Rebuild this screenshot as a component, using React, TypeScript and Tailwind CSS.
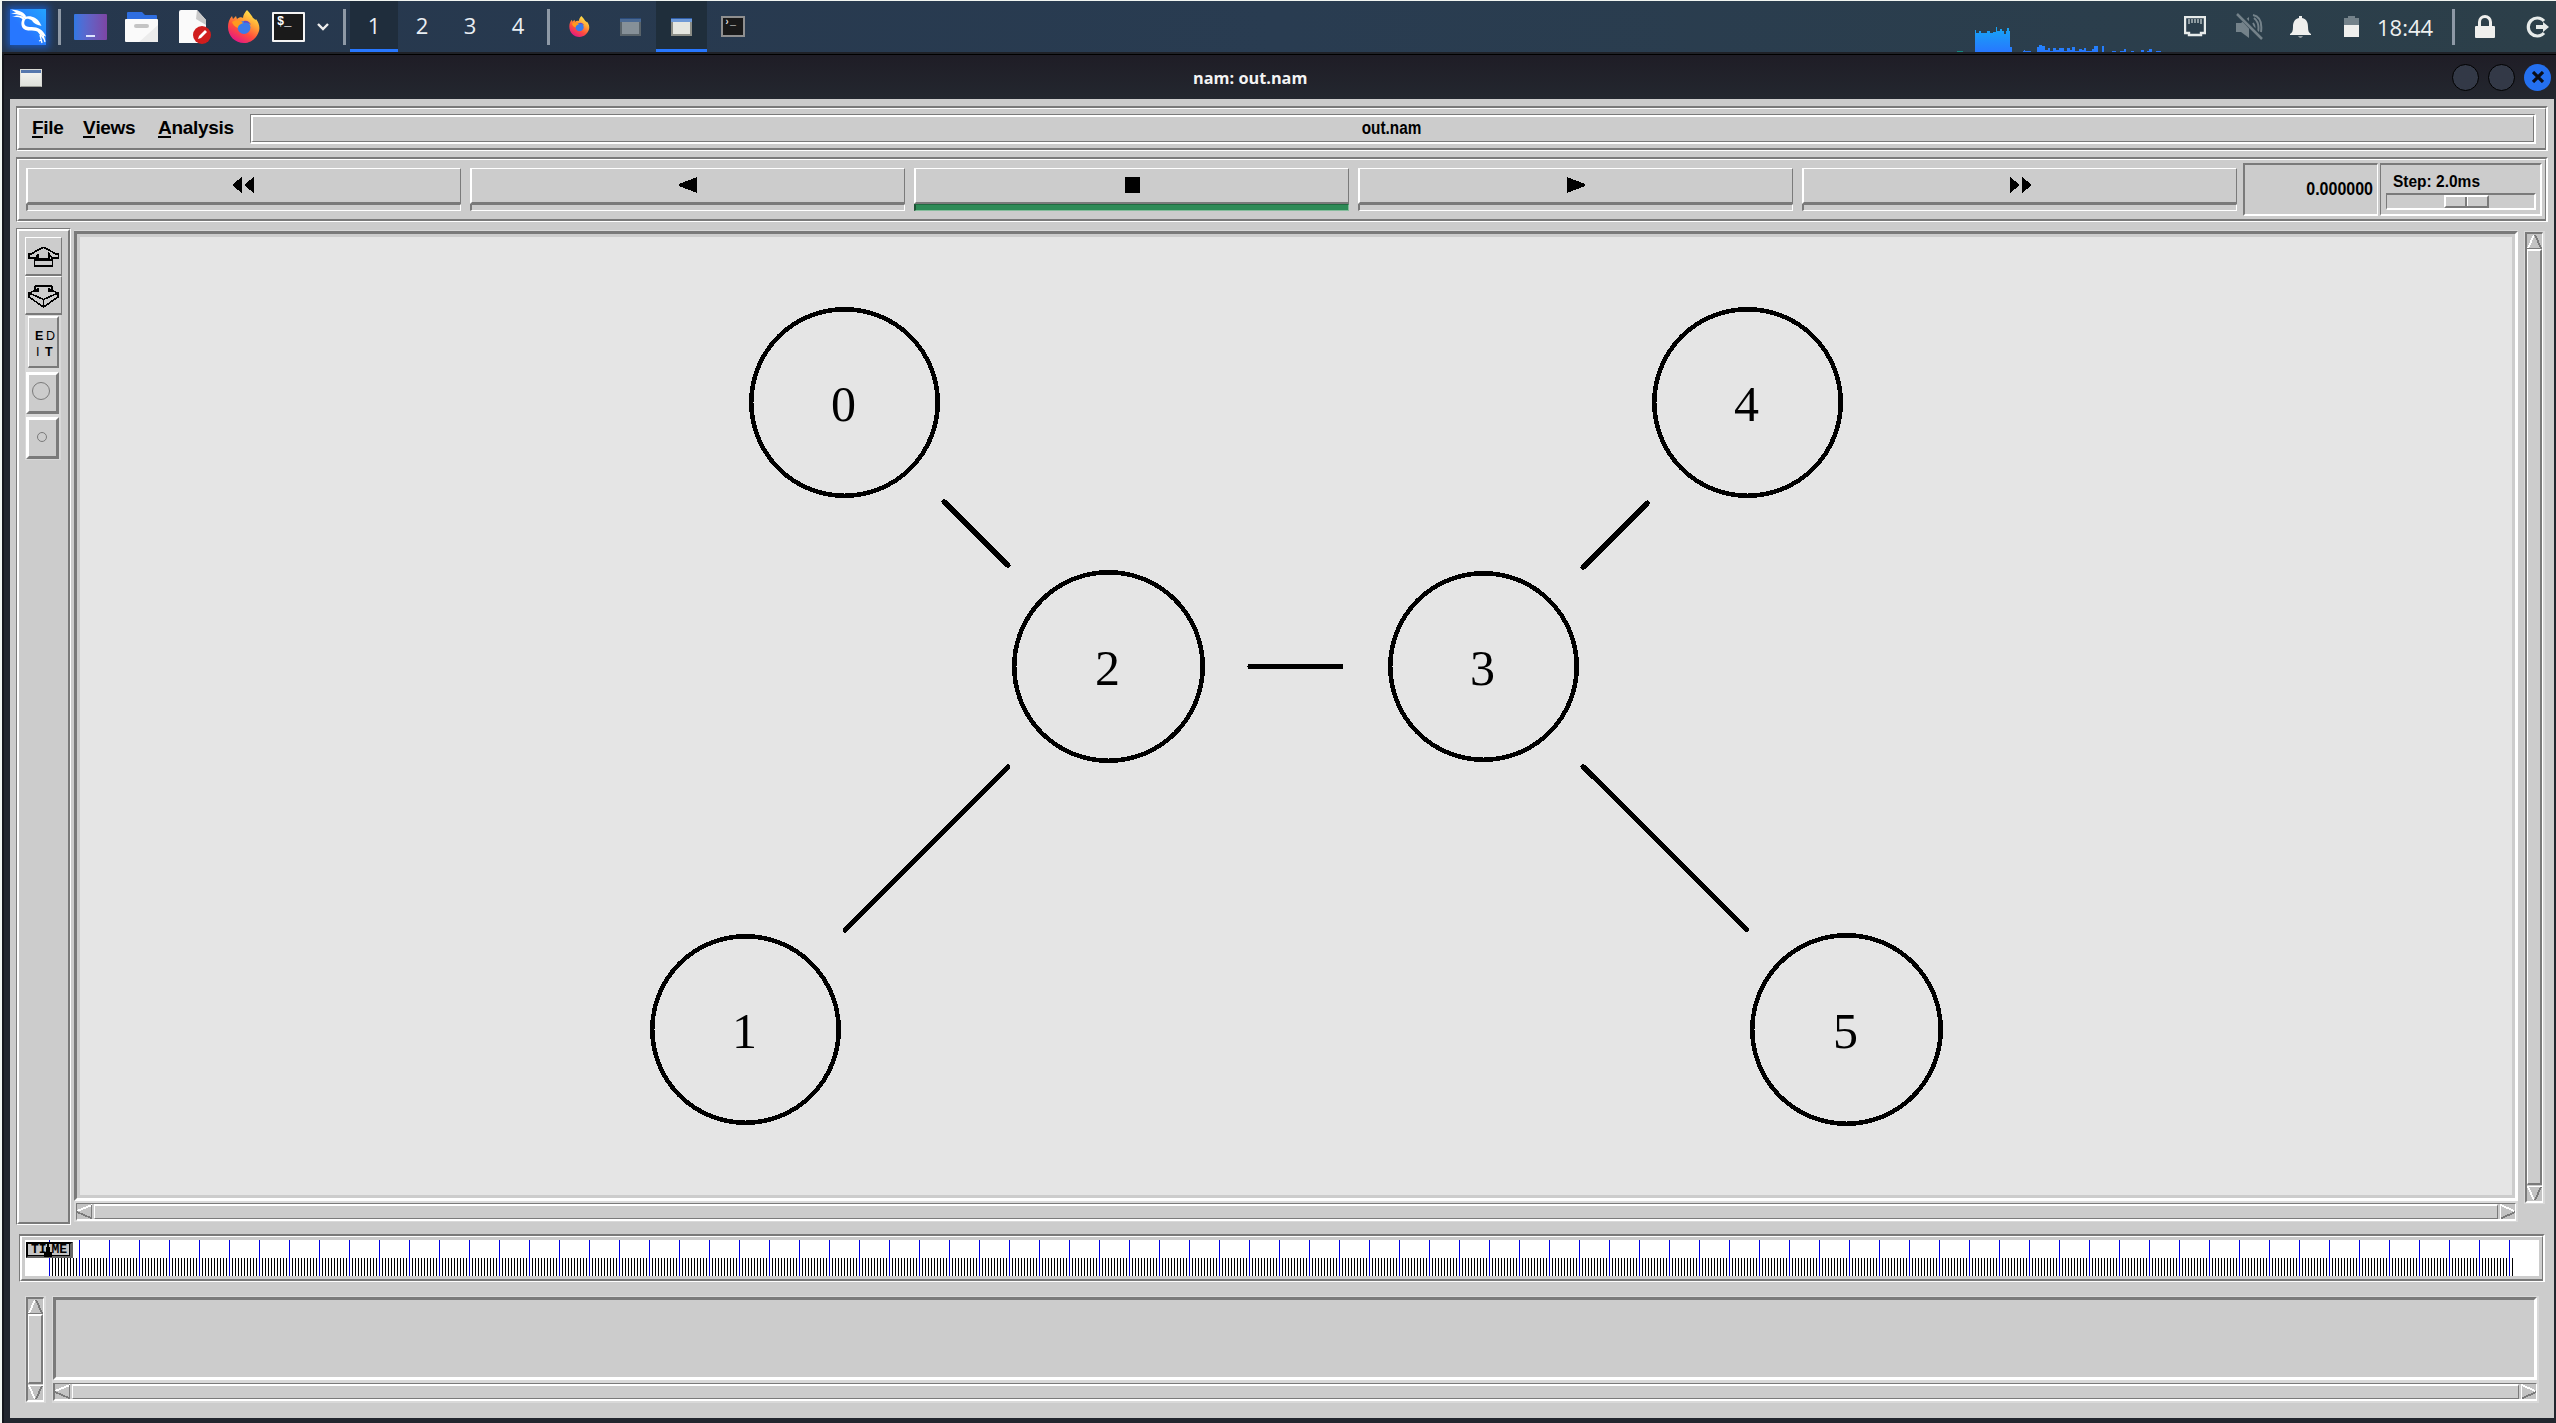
import type { ReactNode } from "react";

function Divider({ className }: { className: string }) {
  return <div className={`h-9 w-[3px] shrink-0 bg-[#8e99a6] ${className}`} />;
}

function KaliLogo() {
  return (
    <svg className="ml-2 h-9 w-9 shrink-0 shadow-[0_0_7px_3px_#1b55b5]" viewBox="0 0 36 36">
      <defs>
        <linearGradient id="kali" x1="1" y1="0" x2="0" y2="1">
          <stop offset="0" stopColor="#23a4ff" />
          <stop offset="0.6" stopColor="#2777ff" />
        </linearGradient>
      </defs>
      <rect width="36" height="36" fill="url(#kali)" />
      <g fill="#fff">
        <path d="M1 0.500C6 1 13 1.500 16 7L15 9.500C11 5.500 6 5 1 4.500L6 3.500Z" />
        <path d="M2 8C6 5.500 12 6 15 9L13 10.500C10 8 6 7.500 2 8Z" />
        <path d="M14 8C20 6 27 8 30 14L31.500 17C28 16 24 15 22 11.500C19 9.500 16 9.500 15 10.500Z" />
        <path d="M13 9C10 14 11 21 18 21.500C24 22 28 21 31.500 26L36 27.500C33 20 27 17.500 20 18C14 18 13 14 15.500 10Z" />
      </g>
      <path d="M28 22L34 30M30 26L32 34M33 26L35 33M29 32L32 31" fill="none" stroke="#fff" strokeWidth="1.300" />
    </svg>
  );
}

function Firefox({ className }: { className: string }) {
  return (
    <svg className={`shrink-0 ${className}`} viewBox="0 0 32 33">
      <defs>
        <linearGradient id="fox" x1="0.85" y1="0.05" x2="0.3" y2="1">
          <stop offset="0" stopColor="#fff04e" />
          <stop offset="0.35" stopColor="#ffa436" />
          <stop offset="0.65" stopColor="#ff4f3c" />
          <stop offset="1" stopColor="#e31587" />
        </linearGradient>
      </defs>
      <path
        d="M19 0C22 3 24 6 25 8C27 9 28 11 28 9C31 13 32 17 31 21C29 28 23 33 16 33C7 33 0 26 0 17C0 13 1 9 4 6L5 9L8 6L9 9C11 7 14 7 15 8C15 5 17 2 19 0Z"
        fill="url(#fox)"
      />
      <circle cx="16" cy="17.5" r="6.5" fill="#3a7bea" />
      <path d="M16 11C19 10 22 12 23 15C21 13 19 12 16 13Z" fill="#6a48c4" />
      <path d="M4 12C8 9 13 10 15 13C13 14 10 15 10 18C7 17 5 15 4 12Z" fill="#ff9a1f" />
    </svg>
  );
}

function WindowIcon({ className }: { className: string }) {
  return (
    <div className={`h-[18px] w-[21px] shrink-0 border-2 border-t-0 border-[#8b8d86] bg-[#e4e6e0] ${className}`}>
      <div className="-mx-0.5 h-1 border-t border-[#2f5ea8] bg-[#6f9ad6]" />
    </div>
  );
}

function Panel() {
  return (
    <div className="flex h-[52px] shrink-0 items-center overflow-hidden border-t border-[#f1f5f1] bg-linear-to-r from-[#26374d] via-[#293c51] to-[#2c3f49] font-normal">
      <KaliLogo />
      <Divider className="ml-3" />
      <div className="ml-[13px] flex h-[26px] w-[33px] shrink-0 items-end justify-center rounded-[1px] bg-linear-to-r from-[#2f78e4] to-[#7c45a4] pb-[3px]">
        <div className="h-0.5 w-[9px] bg-[#dde4ff]" />
      </div>
      <svg className="ml-[18px] h-[30px] w-[33px] shrink-0" viewBox="0 0 33 30">
        <path d="M2 1q0-1 1-1h14l3 3h11q1 0 1 1v4H2z" fill="#2f6ee0" />
        <rect y="7" width="33" height="23" rx="1" fill="#fafafa" />
        <path d="M33 13V30H14z" fill="#ececec" />
        <rect x="9" y="12" width="15" height="4" rx="2" fill="#c4c4c4" />
      </svg>
      <svg className="ml-[21px] h-[34px] w-8 shrink-0" viewBox="0 0 32 34">
        <path d="M2 0H18L27 10V33H0V2Q0 0 2 0Z" fill="#fafafa" />
        <path d="M18 0L27 10V15L17 9z" fill="#c9c9c9" />
        <circle cx="23" cy="25" r="9" fill="#d01d1d" />
        <path d="M19 29L20 26L26 20L28 22L22 28Z" fill="#fff" />
      </svg>
      <Firefox className="ml-[17px] h-[33px] w-8" />
      <div className="ml-3 h-[30px] w-[33px] shrink-0 rounded-[1px] border-2 border-[#f4f4f4] bg-[#1a1a1a] pl-[3px] font-['Liberation_Mono'] text-[12px] leading-[16px] font-bold text-white">
        $_
      </div>
      <svg className="ml-3 h-2 w-3 shrink-0" viewBox="0 0 12 8">
        <path d="M1 1L6 6L11 1" fill="none" stroke="#eee" strokeWidth="2.4" />
      </svg>
      <Divider className="ml-3.5" />
      <div className="ml-1 flex self-stretch font-['Open_Sans'] text-[22px] leading-[49px] text-[#e9eef3]">
        <div className="w-12 border-b-[3px] border-[#2777ff] bg-[#1f2d3c] text-center">1</div>
        <div className="w-12 text-center">2</div>
        <div className="w-12 text-center">3</div>
        <div className="w-12 text-center">4</div>
      </div>
      <Divider className="ml-[5px]" />
      <Firefox className="ml-[19px] h-[21px] w-[21px]" />
      <WindowIcon className="ml-[30px] opacity-50" />
      <div className="ml-[15px] flex w-[51px] items-center justify-center self-stretch border-b-[3px] border-[#2777ff] bg-[#1f2e3b]">
        <WindowIcon className="mt-[3px]" />
      </div>
      <div className="ml-3.5 h-[21px] w-6 shrink-0 border-2 border-[#8f8f8f] bg-[#191919] pl-px font-['Liberation_Mono'] text-[10px] leading-[10px] font-bold text-[#ddd]">
        ›_
      </div>
      <svg className="ml-[1212px] h-[25px] w-[205px] shrink-0 self-end" viewBox="0 0 205 25" shapeRendering="crispEdges">
        <defs>
          <linearGradient id="load" gradientUnits="userSpaceOnUse" x1="0" y1="0" x2="0" y2="25">
            <stop offset="0" stopColor="#17a6f5" />
            <stop offset="1" stopColor="#2777ff" />
          </linearGradient>
        </defs>
        <path d="M0 24h6v1h-6z" fill="#138a80" />
        <path
          d="M18 3h1v3h3v-2h2v2h6v-2h3v2h3v-1h3v-5h1v4h3v-2h2v2h2v3h2v-3h1v-3h2v3h1v16h2v5h7v1H18zM66 25v-1h1v-1h1v1h6v1zM80 25v-5h2v-2h3v1h3v4h3v-2h2v3h3v-3h3v2h3v-2h5v3h3v-3h3v2h2v-3h3v4h4v-2h3v1h2v-2h2v3h6v-2h2v-3h4v6h4v-6h2v6zM155 25v-1h4v1zM163 25v-1h4v-2h2v3zM174 25v-1h3v1zM184 25v-2h3v2zM190 25v-1h2v-2h3v3zM199 25v-1h5v1z"
          fill="url(#load)"
        />
      </svg>
      <svg className="ml-[22px] h-[21px] w-[22px] shrink-0" viewBox="0 0 22 21">
        <path d="M1 1H21V17H17V19H5V17H1Z" fill="none" stroke="#e7ebea" strokeWidth="2.4" />
        <path d="M5 3v5M8 3v4M11 3v4M14 3v4M17 3v5" stroke="#c3cccd" strokeWidth="1.3" />
      </svg>
      <svg className="ml-[30px] h-7 w-7 shrink-0" viewBox="0 0 28 28" fill="none" stroke="#74828a" strokeWidth="2">
        <path d="M0 10H5L13 4V25L5 19H0Z" fill="#74828a" stroke="none" />
        <path d="M17 10Q20 14 17 19M18 5Q24 10 22 19M17 2Q27 4 25 19" />
        <path d="M2 0L27 27" stroke="#2b3e4a" strokeWidth="5" />
        <path d="M1 1L26 26" strokeWidth="2.5" />
      </svg>
      <svg className="ml-[26px] h-[22px] w-[21px] shrink-0" viewBox="0 0 21 22" fill="#efefed">
        <path d="M9 0h3v2c5 1 6 5 6 9 0 4 1 6 3 7v1H0v-1c2-1 3-3 3-7 0-4 1-8 6-9zM8 20.500h5q-2.500 2-5 0z" />
      </svg>
      <svg className="ml-[33px] h-[22px] w-[15px] shrink-0" viewBox="0 0 15 22" shapeRendering="crispEdges">
        <path d="M4 0h7v2h4v8H0V2h4z" fill="#74828a" />
        <path d="M0 9h15v12H0z" fill="#efefed" />
      </svg>
      <div className="ml-[18px] w-[58px] shrink-0 font-['Open_Sans'] text-[22px] leading-[50px] text-[#eef0f0]">18:44</div>
      <Divider className="ml-[17px]" />
      <svg className="ml-5 h-6 w-5 shrink-0" viewBox="0 0 20 24">
        <path d="M4.500 12V7a5.500 5.500 0 0 1 11 0v5" fill="none" stroke="#efefed" strokeWidth="3" />
        <rect y="11" width="20" height="12" rx="1" fill="#efefed" />
      </svg>
      <svg className="ml-[31px] h-[22px] w-[23px] shrink-0" viewBox="0 0 23 22">
        <path d="M18 5A9 9 0 1 0 18 17" fill="none" stroke="#e7ebea" strokeWidth="3.2" />
        <path d="M10 9h7V6l6 5-6 5v-3h-7z" fill="#e7ebea" />
      </svg>
    </div>
  );
}

function TitleBar() {
  return (
    <div className="flex h-[45px] items-center border-t border-black bg-linear-to-b from-[#1f1d26] to-[#23272f] pl-4">
      <div className="mt-px h-[18px] w-[22px] border border-[#d9dad5] border-b-[#9a9c96] bg-linear-to-b from-[#f5f5f3] to-[#dde0da]">
        <div className="h-[3px] bg-[#5577ad]" />
      </div>
      <div className="ml-[1151px] w-[1259px] pt-0.5 font-['Open_Sans'] text-[16.300px] leading-5 font-bold whitespace-nowrap text-[#f3f3f3]">
        nam: out.nam
      </div>
      <div className="h-[27px] w-[27px] rounded-full border-[1.500px] border-black bg-[#333947]" />
      <div className="ml-[9px] h-[27px] w-[27px] rounded-full border-[1.500px] border-black bg-[#333947]" />
      <div className="ml-[9px] flex h-[27px] w-[27px] items-center justify-center rounded-full bg-[#2470f0]">
        <svg className="h-3 w-3" viewBox="0 0 12 12">
          <path d="M1 1L11 11M11 1L1 11" stroke="#0b0e18" strokeWidth="3.200" />
        </svg>
      </div>
    </div>
  );
}

/* Ridge frame of the two top bars: sunken edge outside, raised edge inside. */
function BarFrame({ className, children }: { className: string; children: ReactNode }) {
  return (
    <div className={`w-[2532px] border-t-2 border-r-2 border-b border-l border-t-[#7a7a7a] border-r-white border-b-white border-l-[#7a7a7a] ${className}`}>
      <div className="flex h-full border-t border-r border-b-2 border-l-2 border-t-white border-r-[#7a7a7a] border-b-[#7a7a7a] border-l-white">
        {children}
      </div>
    </div>
  );
}

function MenuItem({ first, rest, className }: { first: string; rest: string; className: string }) {
  return (
    <div className={`flex pt-[9px] text-[19px] leading-[20px] tracking-[-0.300px] ${className}`}>
      <span className="h-5 border-b-2 border-black">{first}</span>
      {rest}
    </div>
  );
}

function MenuBar() {
  return (
    <BarFrame className="h-[45px]">
      <MenuItem first="F" rest="ile" className="ml-[13px] w-[51px]" />
      <MenuItem first="V" rest="iews" className="w-[75px]" />
      <MenuItem first="A" rest="nalysis" className="w-[92px]" />
      <div className="mt-[5px] h-[30px] w-[2286px] border border-[#7a7a7a] border-r-2 border-b-2 border-r-white border-b-white">
        <div className="h-full border-t-2 border-r border-b border-l-2 border-t-white border-r-[#7a7a7a] border-b-[#7a7a7a] border-l-white pr-[3px] text-center text-[15.300px] leading-[22px]">
          <span className="inline-block scale-y-115">out.nam</span>
        </div>
      </div>
    </BarFrame>
  );
}

function TransportButton({ glyph, active = false }: { glyph: string; active?: boolean }) {
  return (
    <div className="w-[435px]">
      <div className="flex h-9 justify-center border-t border-r border-b-2 border-l-2 border-t-white border-r-[#7a7a7a] border-b-[#7a7a7a] border-l-white pr-px">
        <svg className="mt-2 h-4 w-[22px]" viewBox="0 0 22 16" shapeRendering="crispEdges">
          <path d={glyph} />
        </svg>
      </div>
      <div
        className={
          active
            ? "h-[7px] border border-l-2 border-t-[#1f6b40] border-r-[#85bd9c] border-b-[#85bd9c] border-l-[#1c5334] bg-[#2e8b57]"
            : "h-[7px] border border-l-2 border-t-[#7a7a7a] border-r-white border-b-white border-l-[#7a7a7a]"
        }
      />
    </div>
  );
}

function TransportBar() {
  return (
    <BarFrame className="mt-1.5 h-[65px]">
      <div className="mt-2 ml-[7px] flex gap-[9px]">
        <TransportButton glyph="M9 0V16L0 9V7ZM21 0V16L12 9V7Z" />
        <TransportButton glyph="M20 0V16L2 9V7Z" />
        <TransportButton glyph="M4 0H19V16H4Z" active />
        <TransportButton glyph="M2 0V16L20 9V7Z" />
        <TransportButton glyph="M1 0V16L10 9V7ZM13 0V16L22 9V7Z" />
      </div>
      <div className="mt-[3px] ml-1.5 h-[53px] w-[135px] border-2 border-t-[#7a7a7a] border-r border-r-white border-b-white border-l-[#7a7a7a] pt-3.5 pr-1 text-right text-[16px] leading-5">
        <span className="inline-block scale-y-110">0.000000</span>
      </div>
      <div className="mt-[3px] ml-0.5 h-[53px] w-[162px] border-2 border-l border-t-[#7a7a7a] border-r-white border-b-white border-l-[#7a7a7a] pt-1.5 pl-[5px]">
        <div className="h-[22px] pl-[7px] text-[15.500px] leading-5">
          <span className="inline-block scale-y-110">Step: 2.0ms</span>
        </div>
        <div className="flex h-[17px] w-[150px] border-2 border-l border-t-[#7a7a7a] border-r-white border-b-white border-l-[#7a7a7a] pl-[57px]">
          <div className="flex h-[13px] w-[45px] border-2 border-t-white border-r-[#7a7a7a] border-b-[#7a7a7a] border-l-white">
            <div className="ml-[19px] w-[3px] border-r border-l-2 border-r-white border-l-[#7a7a7a]" />
          </div>
        </div>
      </div>
    </BarFrame>
  );
}

function ToolBox() {
  return (
    <div className="h-[997px] w-[55px] border border-t-[#7a7a7a] border-r-white border-b-white border-l-[#7a7a7a]">
      <div className="flex h-full flex-col border-2 border-t-white border-r-[#7a7a7a] border-b-[#7a7a7a] border-l-white pt-1.5 pl-1.5">
        <div className="h-[39px] w-[37px] border border-b-2 border-t-white border-r-[#7a7a7a] border-b-[#7a7a7a] border-l-white">
          <svg className="mt-2 ml-0.5 h-[21px] w-[31px]" viewBox="0 0 31 21" fill="none" stroke="#000" strokeWidth="1.700" shapeRendering="crispEdges">
            <path d="M15.500 1L28 8H31V12H24L21 8V13M15.500 1L3 8H0.800V12H8L10 8V13M6.500 14H24.500V20H6.500ZM10 13H21" />
          </svg>
        </div>
        <div className="h-[39px] w-[37px] border border-b-2 border-t-white border-r-[#7a7a7a] border-b-[#7a7a7a] border-l-white">
          <svg className="mt-2 ml-0.5 h-[23px] w-[31px]" viewBox="0 0 31 23" fill="none" stroke="#000" strokeWidth="1.600" shapeRendering="crispEdges">
            <path d="M7 1H24M7 1V4L10 6M24 1V4L21 6M10 3V6M21 3V6M6 6H11M20 6H25M6 6L1 8V12L15.500 22L30 12V8L25 6M1 8L15.500 14.500L30 8M15.500 14V22" />
          </svg>
        </div>
        <div className="h-[55px] w-9 bg-[#d9d9d9] pt-px pl-[3px]">
          <div className="flex h-[52px] w-[31px] flex-col border border-t-2 border-r-2 border-b-2 border-t-white border-r-[#7a7a7a] border-b-[#7a7a7a] border-l-white bg-[#ccc] pt-2.5 pl-1.5 font-['Liberation_Sans'] text-[12.500px] leading-4 font-bold">
            <div className="flex">
              <span className="w-[11px]">E</span>
              <span className="font-normal">D</span>
            </div>
            <div className="flex">
              <span className="w-[10px] pl-px font-normal">I</span>
              <span>T</span>
            </div>
          </div>
        </div>
        <div className="h-[45px] w-9 bg-[#d9d9d9] pt-0.5 pl-px">
          <div className="h-[42px] w-[33px] border-[3px] border-t-white border-r-[#7a7a7a] border-b-[#7a7a7a] border-l-white bg-[#ccc] pt-[7px] pl-[3px]">
            <div className="h-[18px] w-[18px] rounded-full border-[1.500px] border-[#7a7a7a]" />
          </div>
        </div>
        <div className="h-[45px] w-9 bg-[#d9d9d9] pt-0.5 pl-px">
          <div className="h-[42px] w-[33px] border-[3px] border-t-white border-r-[#7a7a7a] border-b-[#7a7a7a] border-l-white bg-[#ccc] pt-3 pl-2">
            <div className="h-2.5 w-2.5 rounded-full border border-[#7a7a7a]" />
          </div>
        </div>
      </div>
    </div>
  );
}

const arrows = {
  left: { light: "M0 7L15 1", dark: "M0 8L14 14M14.500 1V15" },
  right: { light: "M0.500 0V15M1 1L14 7", dark: "M1 14.500L15 8" },
  up: { light: "M1 14L7 1", dark: "M8 1L14 14M0 14.500H15" },
  down: { light: "M1 1L7 14M0 0.500H15", dark: "M8 14L14 1" },
};

function Arrow({ dir }: { dir: keyof typeof arrows }) {
  return (
    <svg className="h-[15px] w-[15px] shrink-0 bg-[#c3c3c3]" viewBox="0 0 15 15" fill="none" shapeRendering="crispEdges">
      <path d={arrows[dir].light} stroke="#fff" strokeWidth="1.800" />
      <path d={arrows[dir].dark} stroke="#7a7a7a" strokeWidth="1.800" />
    </svg>
  );
}

function VScroll({ className }: { className: string }) {
  return (
    <div className={`w-[21px] shrink-0 bg-[#d9d9d9] pt-px pr-0.5 pb-px pl-px ${className}`}>
      <div className="flex h-full flex-col border-t-2 border-r border-b-2 border-l-2 border-t-[#7a7a7a] border-r-white border-b-white border-l-[#7a7a7a] bg-[#ccc]">
        <Arrow dir="up" />
        <div className="mb-px flex-1 border-t-2 border-r-2 border-b-2 border-l border-t-white border-r-[#7a7a7a] border-b-[#7a7a7a] border-l-white" />
        <Arrow dir="down" />
      </div>
    </div>
  );
}

function HScroll({ className }: { className: string }) {
  return (
    <div className={`flex h-[18px] border border-b-2 border-t-[#7a7a7a] border-r-white border-b-white border-l-[#7a7a7a] bg-[#ccc] ${className}`}>
      <Arrow dir="left" />
      <div className="mr-0.5 ml-0.5 flex-1 border border-t-2 border-t-white border-r-[#7a7a7a] border-b-[#7a7a7a] border-l-white" />
      <Arrow dir="right" />
    </div>
  );
}

const nodes = [
  { id: 0, x: 844.5, y: 402.5, r: 93.25 },
  { id: 1, x: 745.5, y: 1029.5, r: 93.25 },
  { id: 2, x: 1108.5, y: 666.5, r: 94.25 },
  { id: 3, x: 1483.5, y: 666.5, r: 93.25 },
  { id: 4, x: 1747.5, y: 402.5, r: 93.25 },
  { id: 5, x: 1846.5, y: 1029.5, r: 94.25 },
];

const links = [
  [944, 501.5, 1008, 565.5],
  [845, 930, 1008, 767],
  [1250, 666.5, 1341, 666.5],
  [1583, 567.5, 1647.5, 503],
  [1583, 766.5, 1746.5, 929.5],
];

function Topology() {
  return (
    <svg className="block h-[958px] w-[2432px] bg-[#e5e5e5]" viewBox="80 237 2432 958">
      {links.map(([x1, y1, x2, y2]) => (
        <line key={`${x1}-${y1}`} x1={x1} y1={y1} x2={x2} y2={y2} stroke="#000" strokeWidth="5" strokeLinecap="round" shapeRendering="crispEdges" />
      ))}
      {nodes.map((n) => (
        <g key={n.id}>
          <circle cx={n.x} cy={n.y} r={n.r} fill="none" stroke="#000" strokeWidth="4.500" shapeRendering="crispEdges" />
          <text x={n.x - 1} y={n.y + 18.5} textAnchor="middle" className="font-['Liberation_Serif'] text-[50px] font-normal">
            {n.id}
          </text>
        </g>
      ))}
    </svg>
  );
}

const majorTicks = Array.from({ length: 83 }, (_, i) => i);
const minorTicks = Array.from({ length: 821 }, (_, i) => i + 1).filter((i) => i % 10 !== 0);

function Timeline() {
  return (
    <div className="mt-[9px] ml-[3px] h-12 w-[2526px] border-t-2 border-r-2 border-b border-l border-t-[#7a7a7a] border-r-white border-b-white border-l-[#7a7a7a]">
      <div className="h-full border-t border-r border-b-2 border-l-2 border-t-white border-r-[#7a7a7a] border-b-[#7a7a7a] border-l-white pt-[3px] pl-[3px]">
        <div className="relative h-9 w-[2514px] bg-white">
          <svg className="h-9 w-[2514px]" viewBox="0 0 2514 36" shapeRendering="crispEdges">
            <path d={minorTicks.map((i) => `M${24.5 + i * 3} 18v18`).join("")} stroke="#000" />
            <path d={majorTicks.map((i) => `M${24.5 + i * 30} 0v36`).join("")} stroke="#0000e0" />
          </svg>
          <div className="absolute top-0.5 left-px flex h-4 w-[47px] justify-between border-2 border-r-[3px] border-black border-r-[#666] border-b-[#666] bg-[#c4c4c4] px-[3px] font-['Liberation_Mono'] text-[13px] leading-[12px] font-bold shadow-[inset_-1px_-1px_#000]">
            <span>TI</span>
            <span>ME</span>
          </div>
          <svg className="absolute top-0.5 left-[19px] h-[15px] w-2" viewBox="0 0 8 15" shapeRendering="crispEdges">
            <path d="M3 0h2v5h1v5h2v5H0v-5h2V5h1z" />
          </svg>
        </div>
      </div>
    </div>
  );
}

export default function App() {
  return (
    <div className="flex h-[1423px] w-[2556px] flex-col overflow-hidden border-l-2 border-[#f1f5f1] bg-[#22262e] font-['Liberation_Sans',sans-serif] font-bold text-black">
      <Panel />
      <div className="h-0.5 bg-[#1f2127]" />
      <div className="h-[1369px] border-l-2 border-[#14161c]">
        <TitleBar />
        <div className="ml-1.5 h-[1319px] w-[2544px] bg-[#ccc] pt-[7px] pl-1.5">
          <MenuBar />
          <TransportBar />
          <div className="mt-1.5 flex">
            <ToolBox />
            <div className="mt-0.5 ml-[3px] h-[992px] w-[2444px] bg-[#d9d9d9] pt-px">
              <div className="h-[970px] border-[3px] border-t-[#7a7a7a] border-r-white border-b-white border-l-[#7a7a7a] bg-[#ccc] p-[3px]">
                <Topology />
              </div>
              <HScroll className="mt-0.5 ml-0.5 w-[2440px]" />
            </div>
            <VScroll className="mt-[3px] ml-1.5 h-[973px]" />
          </div>
          <Timeline />
          <div className="mt-3.5 ml-[9px] flex">
            <VScroll className="h-[107px]" />
            <div className="ml-1.5 h-[107px] w-[2487px] bg-[#d9d9d9] pt-px pl-px">
              <div className="h-[83px] w-[2484px] border-[3px] border-t-[#7a7a7a] border-r-white border-b-white border-l-[#7a7a7a] bg-[#ccc]" />
              <HScroll className="mt-[3px] w-[2484px] border-l-2" />
            </div>
          </div>
        </div>
      </div>
    </div>
  );
}
